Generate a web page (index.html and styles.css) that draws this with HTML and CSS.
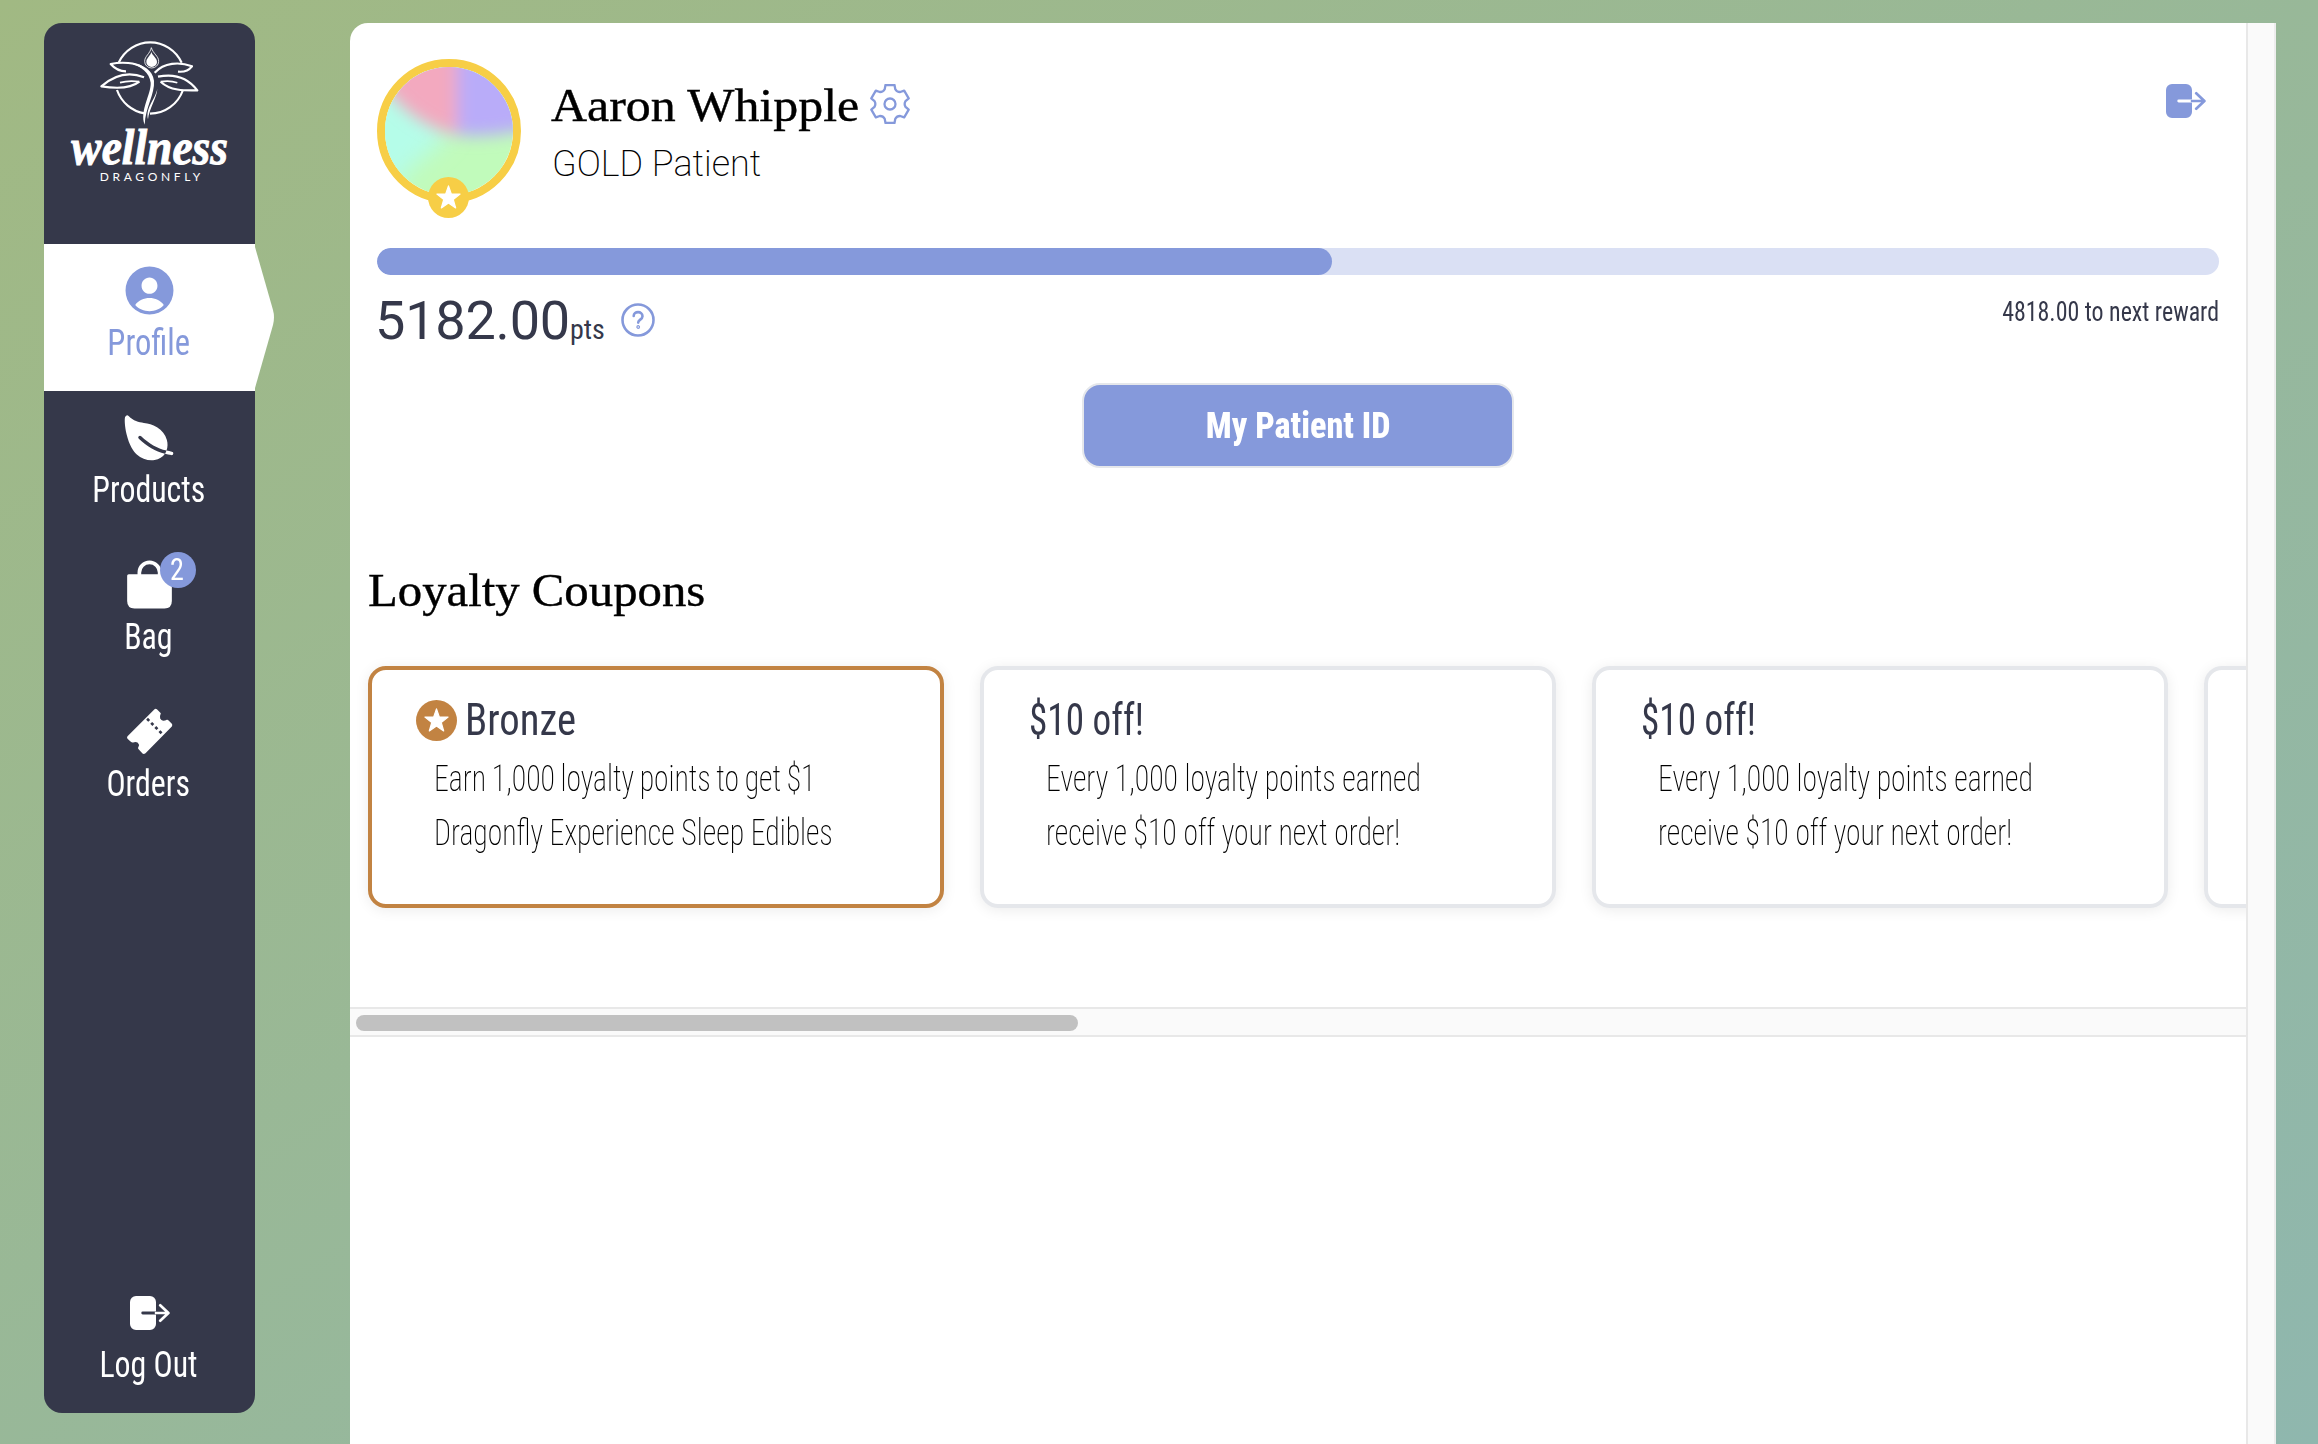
FILE: index.html
```html
<!DOCTYPE html>
<html lang="en">
<head>
<meta charset="utf-8">
<title>Wellness Dragonfly</title>
<link rel="stylesheet" href="styles.css">
</head>
<body>
<svg class="defs" aria-hidden="true">
  <symbol id="exit" viewBox="0 0 40 34">
    <path d="M6 0H20A6 6 0 0 1 26 6V15.600H12.700a1.400 1.400 0 0 0 0 2.800H26V28A6 6 0 0 1 20 34H6A6 6 0 0 1 0 28V6A6 6 0 0 1 6 0Z" fill="currentColor"/>
    <path d="M26 17H38M30.200 9.300L38.400 17L30.200 24.700" fill="none" stroke="currentColor" stroke-width="2.700" stroke-linecap="round" stroke-linejoin="round"/>
  </symbol>
  <symbol id="star" viewBox="-20 -20 40 40">
    <circle r="20" fill="currentColor"/>
    <path d="M0 -11.300L2.800 -3.300H11.300L4.600 1.900L7 10.200L0 5.300L-7 10.200L-4.600 1.900L-11.300 -3.300H-2.800Z" fill="#fff" stroke="#fff" stroke-width="1.200" stroke-linejoin="round"/>
  </symbol>
</svg>
<div class="app">
  <nav class="sidebar">
    <div class="brand">
      <svg class="logo" viewBox="0 0 510 480">
        <g fill="none" stroke="#fff" stroke-width="6.500" stroke-linejoin="round">
          <path d="M164 86A105 108 0 0 1 353 86M159 168A105 108 0 0 0 242 238M258 239A105 108 0 0 0 357 168"/>
          <path d="M186 112C165 112 153 105 140 90C175 83 213 86 236 100"/>
          <path d="M272 116C300 86 345 82 384 97C374 110 362 115 342 113"/>
          <path d="M240 130C195 112 150 124 112 157C150 163 200 164 226 143"/>
          <path d="M282 128C330 118 372 132 400 169C360 170 318 170 290 143"/>
          <path d="M168 146C188 140 205 140 226 143M340 146C325 141 308 140 290 143" stroke-width="5"/>
          <path d="M262 41C258 60 242 66 242 82A21 20 0 0 0 284 82C284 66 268 60 262 41" stroke-width="2.500"/>
        </g>
        <path d="M200 88C240 90 266 110 270 140C273 180 244 220 242 272C226 230 262 180 260 146C256 116 232 98 200 88Z" fill="#fff"/>
        <path d="M280 164C279 190 255 225 252 256C244 220 272 200 280 164Z" fill="#fff"/>
        <path d="M262 54C266 66 279 72 279 84A16 15 0 0 1 247 84C247 72 259 66 262 54Z" fill="#fff"/>
        <text class="logo-name" x="22" y="390" textLength="470" lengthAdjust="spacingAndGlyphs">wellness</text>
        <text class="logo-sub" x="107" y="440" textLength="302">DRAGONFLY</text>
      </svg>
    </div>
    <a class="nav-item active">
      <svg class="nav-icon" viewBox="0 0 512 512" fill="currentColor"><path fill-rule="evenodd" d="M256 48a208 208 0 1 0 0 416a208 208 0 1 0 0-416ZM256 143c39 0 69 32 69 71s-30 71-69 71s-69-32-69-71s30-71 69-71ZM132 381C160 344 207 322 256 322S352 344 380 381C349 416 304 435 256 435S163 416 132 381Z"/></svg>
      <span class="nav-label">Profile</span>
      <svg class="pointer" viewBox="0 0 19 147"><path d="M0 3L18 66Q20 73.500 18 81L0 144Z" fill="#fff"/></svg>
    </a>
    <a class="nav-item">
      <svg class="nav-icon" viewBox="-12 -20 546 546" fill="currentColor"><path d="M161.350 242a16 16 0 0 1 22.620-.68c73.630 69.360 147.510 111.560 234.450 133.070 11.730-32 12.770-67.220 2.640-101.580-13.440-45.590-44.740-85.310-90.490-114.860-40.840-26.380-81.660-33.250-121.150-39.890-49.820-8.380-96.880-16.300-141.790-63.850-5-5.260-11.810-7.370-18.320-5.660-7.440 2-12.430 7.880-14.820 17.600-5.600 22.750-2 86.510 13.750 153.820 25.290 108.140 65.650 162.860 95.060 189.730 38 34.690 87.620 53.900 136.930 53.900a186 186 0 0 0 27.770-2.040c41.710-6.320 76.430-27.270 96-57.750-89.490-23.280-165.940-67.550-242-139.160a16 16 0 0 1-.65-22.650zM467.430 384.190c-16.830-2.590-33.130-5.840-49-9.770a157.710 157.710 0 0 1-12.130 25.680c-.73 1.250-1.500 2.490-2.290 3.710a584.210 584.210 0 0 0 58.560 12 16 16 0 1 0 4.870-31.620z"/></svg>
      <span class="nav-label">Products</span>
    </a>
    <a class="nav-item">
      <svg class="nav-icon" viewBox="0 0 512 512"><path d="M76 166H436Q450 166 450 180V400Q450 464 386 464H126Q62 464 62 400V180Q62 166 76 166Z" fill="currentColor"/><path d="M168 176V152a88 88 0 0 1 176 0V176" fill="none" stroke="currentColor" stroke-width="32"/></svg>
      <span class="nav-label">Bag</span>
      <span class="badge"><span class="badge-num">2</span></span>
    </a>
    <a class="nav-item">
      <svg class="nav-icon" viewBox="268.500 907.500 177 177"><path d="M372 929Q376 926 380 930L391 941Q387 950 389 957Q392 963 398 964Q404 964 409 961Q412 960 415 964L424 973Q427 977 424 981L345 1061Q340 1065 336 1062L323 1048Q322 1045 324 1042Q328 1036 322 1030Q316 1026 308 1029Q304 1030 301 1027L291 1018Q288 1014 291 1010Z" fill="currentColor"/><path d="M349 957L395 1003" stroke="#35384a" stroke-width="8" stroke-dasharray="9 8.500" stroke-dashoffset="-1" fill="none"/></svg>
      <span class="nav-label">Orders</span>
    </a>
    <a class="nav-item logout">
      <svg class="nav-icon exit-icon"><use href="#exit"/></svg>
      <span class="nav-label">Log Out</span>
    </a>
  </nav>
  <main class="panel">
    <div class="content">
      <section class="profile">
        <header class="profile-head">
          <div class="avatar">
            <svg viewBox="0 0 128 128">
              <filter id="soft" x="-50%" y="-50%" width="200%" height="200%"><feGaussianBlur stdDeviation="8"/></filter>
              <filter id="softer" x="-50%" y="-50%" width="200%" height="200%"><feGaussianBlur stdDeviation="11"/></filter>
              <rect width="128" height="128" fill="#c1fbbb"/>
              <path d="M-60 -60L90 -60L62 70L18 108L-10 190H-60Z" fill="#b5fde9" filter="url(#softer)"/>
              <g filter="url(#soft)">
                <path d="M-60 -60H72V68Q34 60 4 26L-60 -40Z" fill="#f3a9bf"/>
                <path d="M72 -60H190V44Q128 74 72 68Z" fill="#b9acf9"/>
              </g>
            </svg>
            <svg class="tier"><use href="#star"/></svg>
          </div>
          <div class="identity">
            <div class="name-row">
              <h1 class="name"><span class="fit">Aaron Whipple</span></h1>
              <svg class="gear" viewBox="-20 -20 40 40"><path d="M-4.500 -19H4.500L5.300 -14.800Q6.900 -11.900 10.200 -12L14.200 -13.400L18.700 -5.600L15.500 -2.800Q13.800 0 15.500 2.800L18.700 5.600L14.200 13.400L10.200 12Q6.900 11.900 5.300 14.800L4.500 19H-4.500L-5.300 14.800Q-6.900 11.900 -10.200 12L-14.200 13.400L-18.700 5.600L-15.500 2.800Q-13.800 0 -15.500 -2.800L-18.700 -5.600L-14.200 -13.400L-10.200 -12Q-6.900 -11.900 -5.300 -14.800Z"/><circle r="5.500"/></svg>
            </div>
            <div class="status">GOLD Patient</div>
          </div>
          <svg class="exit-icon head-exit"><use href="#exit"/></svg>
        </header>
        <div class="progress"><div class="progress-fill" style="width:51.82%"></div></div>
        <div class="points-row">
          <div class="points"><span class="points-value">5182.00</span><span class="points-unit">pts</span></div>
          <svg class="help" viewBox="-17 -17 34 34"><circle r="15.500"/><path d="M-4.300 -4C-4.300 -9.200 4.500 -9.200 4.500 -3.800C4.500 -.5 .2 -.3 .2 2.600"/><circle cx=".2" cy="7" r=".6"/></svg>
          <div class="reward">4818.00 to next reward</div>
        </div>
        <button class="id-button"><span class="fit">My Patient ID</span></button>
      </section>
      <section class="coupons">
        <h2 class="coupons-title"><span class="fit">Loyalty Coupons</span></h2>
        <div class="cards">
          <article class="card bronze">
            <h3 class="card-title"><svg class="medal"><use href="#star"/></svg><span class="fit">Bronze</span></h3>
            <p class="card-text"><span class="tight">Earn 1,000 loyalty points to get $1</span><br>Dragonfly Experience Sleep Edibles</p>
          </article>
          <article class="card">
            <h3 class="card-title"><span class="fit price">$10 off!</span></h3>
            <p class="card-text">Every 1,000 loyalty points earned<br>receive $10 off your next order!</p>
          </article>
          <article class="card">
            <h3 class="card-title"><span class="fit price">$10 off!</span></h3>
            <p class="card-text">Every 1,000 loyalty points earned<br>receive $10 off your next order!</p>
          </article>
          <article class="card"></article>
        </div>
        <div class="scroll-x"><div class="thumb"></div></div>
      </section>
    </div>
    <div class="scroll-y"></div>
  </main>
</div>
</body>
</html>
```

FILE: styles.css
```css
* { box-sizing: border-box; }

body {
  margin: 0;
  height: 1444px;
  overflow: hidden;
  font-family: Roboto, "Liberation Sans", sans-serif;
  color: #35384a;
  background: linear-gradient(to bottom right, #a1b983, #8fb7ae);
}

h1, h2, h3, p { margin: 0; font-weight: 400; }
.defs { display: none; }
svg { display: block; flex: none; }
.fit { display: inline-block; transform-origin: left; }

.app {
  display: flex;
  align-items: flex-start;
  height: 1444px;
  padding: 23px 42px 0 44px;
}

/* sidebar */
.sidebar {
  display: flex;
  flex-direction: column;
  width: 211px;
  height: 1390px;
  margin-right: 95px;
  border-radius: 18px;
  background: #35384a;
}
.brand { height: 221px; padding: 11px 0 0 20px; }
.logo { width: 170px; height: 160px; overflow: visible; }
.logo-name {
  font: italic 700 152px "Liberation Serif", serif;
  fill: #fff;
  stroke: #fff;
  stroke-width: 3;
}
.logo-sub { font: 400 36px Lato, sans-serif; fill: #fff; }
.nav-item {
  position: relative;
  display: flex;
  flex-direction: column;
  align-items: center;
  height: 147px;
  padding-top: 17px;
  color: #fff;
}
.nav-icon { width: 59px; height: 59px; }
.nav-label {
  margin: 3px 2px 0 0;
  font-size: 36px;
  line-height: 40px;
  font-weight: 450;
  font-stretch: 75%;
  transform: scaleX(.885);
}
.active { background: #fff; color: #8599db; }
.active .nav-label { transform: scaleX(.905); }
.pointer { position: absolute; left: 211px; top: 0; width: 19px; height: 147px; }
.badge {
  position: absolute;
  left: 116px;
  top: 14px;
  display: flex;
  justify-content: center;
  width: 36px;
  height: 36px;
  border-radius: 50%;
  background: #8599db;
}
.badge-num {
  margin-right: 2px;
  font-size: 32px;
  line-height: 34px;
  font-weight: 450;
  font-stretch: 75%;
  transform: scaleX(.88);
}
.logout { margin-top: auto; }
.exit-icon { width: 40px; height: 34px; }
.logout .exit-icon { margin: 13px 0 12px; }

/* main panel */
.panel {
  display: flex;
  width: 1926px;
  height: 1421px;
  border-radius: 18px 0 0 0;
  background: #fff;
  overflow: hidden;
}
.content { width: 1896px; }
.scroll-y {
  width: 30px;
  background: #fafafa;
  border: solid #e8e8e8;
  border-width: 0 2px;
  border-right-color: #ededed;
}
.profile { display: flex; flex-direction: column; height: 445px; padding: 36px 27px 0; }
.profile-head { display: flex; align-items: flex-start; height: 189px; }
.avatar {
  position: relative;
  width: 144px;
  height: 144px;
  border: 8px solid #f7ce46;
  border-radius: 50%;
}
.avatar > svg:first-child { width: 128px; height: 128px; border-radius: 50%; overflow: hidden; }
.avatar .tier { position: absolute; left: 43px; top: 110px; width: 41px; height: 41px; color: #f7ce46; }
.identity { margin: 17px 0 0 30px; }
.name-row { display: flex; align-items: flex-start; }
.name {
  width: 319px;
  font-family: "Liberation Serif", serif;
  font-size: 46px;
  line-height: 60px;
  color: #000;
  white-space: nowrap;
}
.name .fit { transform: scaleX(1.085); -webkit-text-stroke: .4px #000; }
.gear {
  width: 40px;
  height: 40px;
  margin-top: 8px;
  color: #8599db;
  fill: none;
  stroke: currentColor;
  stroke-width: 2.3px;
  stroke-linejoin: round;
}
.status {
  margin: 4px 0 0 1px;
  font-size: 36px;
  line-height: 48px;
  font-weight: 200;
  color: #000;
}
.head-exit { margin: 25px 13px 0 auto; color: #8599db; }
.progress { flex: none; height: 27px; border-radius: 14px; background: #dae0f4; overflow: hidden; }
.progress-fill { height: 27px; border-radius: 14px; background: #8599db; }
.points-row { display: flex; align-items: flex-start; height: 108px; padding-top: 14px; }
.points { display: flex; align-items: baseline; width: 246px; margin-left: -2px; line-height: 64px; }
.points-value { font-size: 54px; font-weight: 420; letter-spacing: -.2px; }
.points-unit { font-size: 28px; font-stretch: 75%; }
.help {
  width: 34px;
  height: 34px;
  margin-top: 14px;
  color: #8599db;
  fill: none;
  stroke: currentColor;
  stroke-width: 2.6px;
  stroke-linecap: round;
}
.reward {
  margin: 5px 0 0 auto;
  font-size: 27px;
  line-height: 36px;
  font-weight: 450;
  font-stretch: 75%;
  transform: scaleX(.885);
  transform-origin: right;
}
.id-button {
  align-self: center;
  flex: none;
  width: 432px;
  height: 85px;
  padding: 0;
  border: 2px solid #e5e7eb;
  border-radius: 18px;
  background: #8599db;
  color: #fff;
  font: 800 36px/82px Roboto, sans-serif;
}
.id-button .fit { font-stretch: 75%; transform: scaleX(.95); transform-origin: center; }

/* coupons */
.coupons-title {
  padding: 93px 0 25px 18px;
  font-family: "Liberation Serif", serif;
  font-size: 46px;
  line-height: 60px;
  color: #000;
}
.coupons-title .fit { transform: scaleX(1.06); -webkit-text-stroke: .4px #000; }
.cards { display: flex; gap: 36px; height: 361px; padding: 20px 0 0 18px; overflow: hidden; }
.card {
  flex: none;
  width: 576px;
  height: 242px;
  padding: 20px 0 0 45px;
  border: 4px solid #e5e7eb;
  border-radius: 18px;
  box-shadow: 0 2px 14px rgba(0, 0, 0, .08);
}
.bronze { border-color: #c28342; }
.card-title {
  display: flex;
  align-items: center;
  gap: 8px;
  font-size: 45px;
  line-height: 60px;
  font-stretch: 75%;
}
.card-title .fit { transform: scaleX(.905); font-weight: 450; }
.card-title .price { transform: scaleX(.825); }
.medal { width: 41px; height: 41px; margin-left: -1px; color: #c28342; }
.card-text {
  width: max-content;
  margin: 2px 0 0 17px;
  font-size: 36px;
  line-height: 54px;
  font-weight: 200;
  font-stretch: 75%;
  color: #000;
  transform: scaleX(.825);
  transform-origin: left;
}
.tight { word-spacing: -1.2px; }
.scroll-x {
  height: 30px;
  padding: 6px;
  background: #fafafa;
  border: solid #e8e8e8;
  border-width: 2px 0;
}
.thumb { width: 722px; height: 16px; border-radius: 8px; background: #c1c1c1; }
```
